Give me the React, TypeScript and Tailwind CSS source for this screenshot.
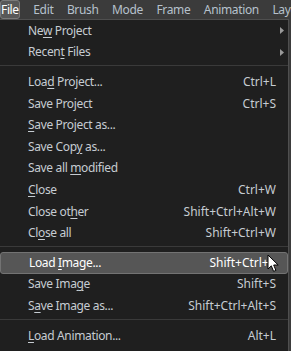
import React from 'react';

type Item = { pre: string; key?: string; post?: string; shortcut?: string; sub?: boolean; active?: boolean } | 'sep';

const items: Item[] = [
    { pre: 'Ne', key: 'w', post: ' Project', sub: true },
    { pre: 'Recen', key: 't', post: ' Files', sub: true },
    'sep',
    { pre: 'Loa', key: 'd', post: ' Project...', shortcut: 'Ctrl+L' },
    { pre: 'Save Project', shortcut: 'Ctrl+S' },
    { pre: '', key: 'S', post: 'ave Project as...' },
    { pre: 'Save Cop', key: 'y', post: ' as...' },
    { pre: 'Save all ', key: 'm', post: 'odified' },
    { pre: '', key: 'C', post: 'lose', shortcut: 'Ctrl+W' },
    { pre: 'Close ot', key: 'h', post: 'er', shortcut: 'Shift+Ctrl+Alt+W' },
    { pre: 'Cl', key: 'o', post: 'se all', shortcut: 'Shift+Ctrl+W' },
    'sep',
    { pre: 'Load ', key: 'I', post: 'mage...', shortcut: 'Shift+Ctrl+L', active: true },
    { pre: 'Save Ima', key: 'g', post: 'e', shortcut: 'Shift+S' },
    { pre: 'S', key: 'a', post: 've Image as...', shortcut: 'Shift+Ctrl+Alt+S' },
    'sep',
    { pre: '', key: 'L', post: 'oad Animation...', shortcut: 'Alt+L' },
];

const menus = ['Edit', 'Brush', 'Mode', 'Frame', 'Animation', 'Layer'];

const Cursor = () => (
    <svg className="absolute left-[267px] top-[254px]" width="13" height="19" viewBox="0 0 13 19">
        <path d="M1 1 L1 15 L4.3 11.8 L6.6 17.4 L8.9 16.4 L6.7 11 L11.2 11 Z" fill="#fff" stroke="#000" strokeWidth="1" strokeLinejoin="round" />
    </svg>
);

export default function App() {
    return (
        <div className="relative w-[291px] h-[351px] overflow-hidden bg-[#3b3b3b] text-[12px]" style={{ fontFamily: '"Noto Sans", "Open Sans", sans-serif' }}>
            <div className="flex items-center h-[19px] text-[#b6c1cc] whitespace-nowrap tracking-[-0.35px]">
                <div className="h-[19px] w-[28px] flex items-center justify-center bg-[#585858] border border-[#7a7a7a] rounded-[3px] text-white">File</div>
                {menus.map(m => (
                    <div key={m} className="ml-[13.5px] flex items-center">{m}</div>
                ))}
            </div>
            <div className="w-[289px] h-[332px] bg-[#1f1f1f] border-t border-r border-[#4f4f4f]">
                {items.map((it, i) =>
                    it === 'sep' ? (
                        <div key={i} className="h-[8px] pt-[2px]"><div className="h-px w-full bg-[#3a3a3a]" /></div>
                    ) : (
                        <div
                            key={i}
                            className={`h-[21.6px] flex items-center pl-[28px] pr-[12px] ${it.active ? 'bg-[#565656] border border-[#737373] rounded-[3px] text-white' : 'text-[#c6ccd2]'}`}
                        >
                            <span className="flex-1 whitespace-nowrap tracking-[-0.35px]">
                                {it.pre}
                                {it.key && <span className="underline underline-offset-2">{it.key}</span>}
                                {it.post}
                            </span>
                            {it.shortcut && <span className="whitespace-nowrap">{it.shortcut}</span>}
                            {it.sub && (
                                <svg width="4" height="7" viewBox="0 0 4 7" className="mr-[-8px]"><path d="M0 0 L4 3.5 L0 7 Z" fill="#9a9a9a" /></svg>
                            )}
                        </div>
                    )
                )}
            </div>
            <Cursor />
        </div>
    );
}
